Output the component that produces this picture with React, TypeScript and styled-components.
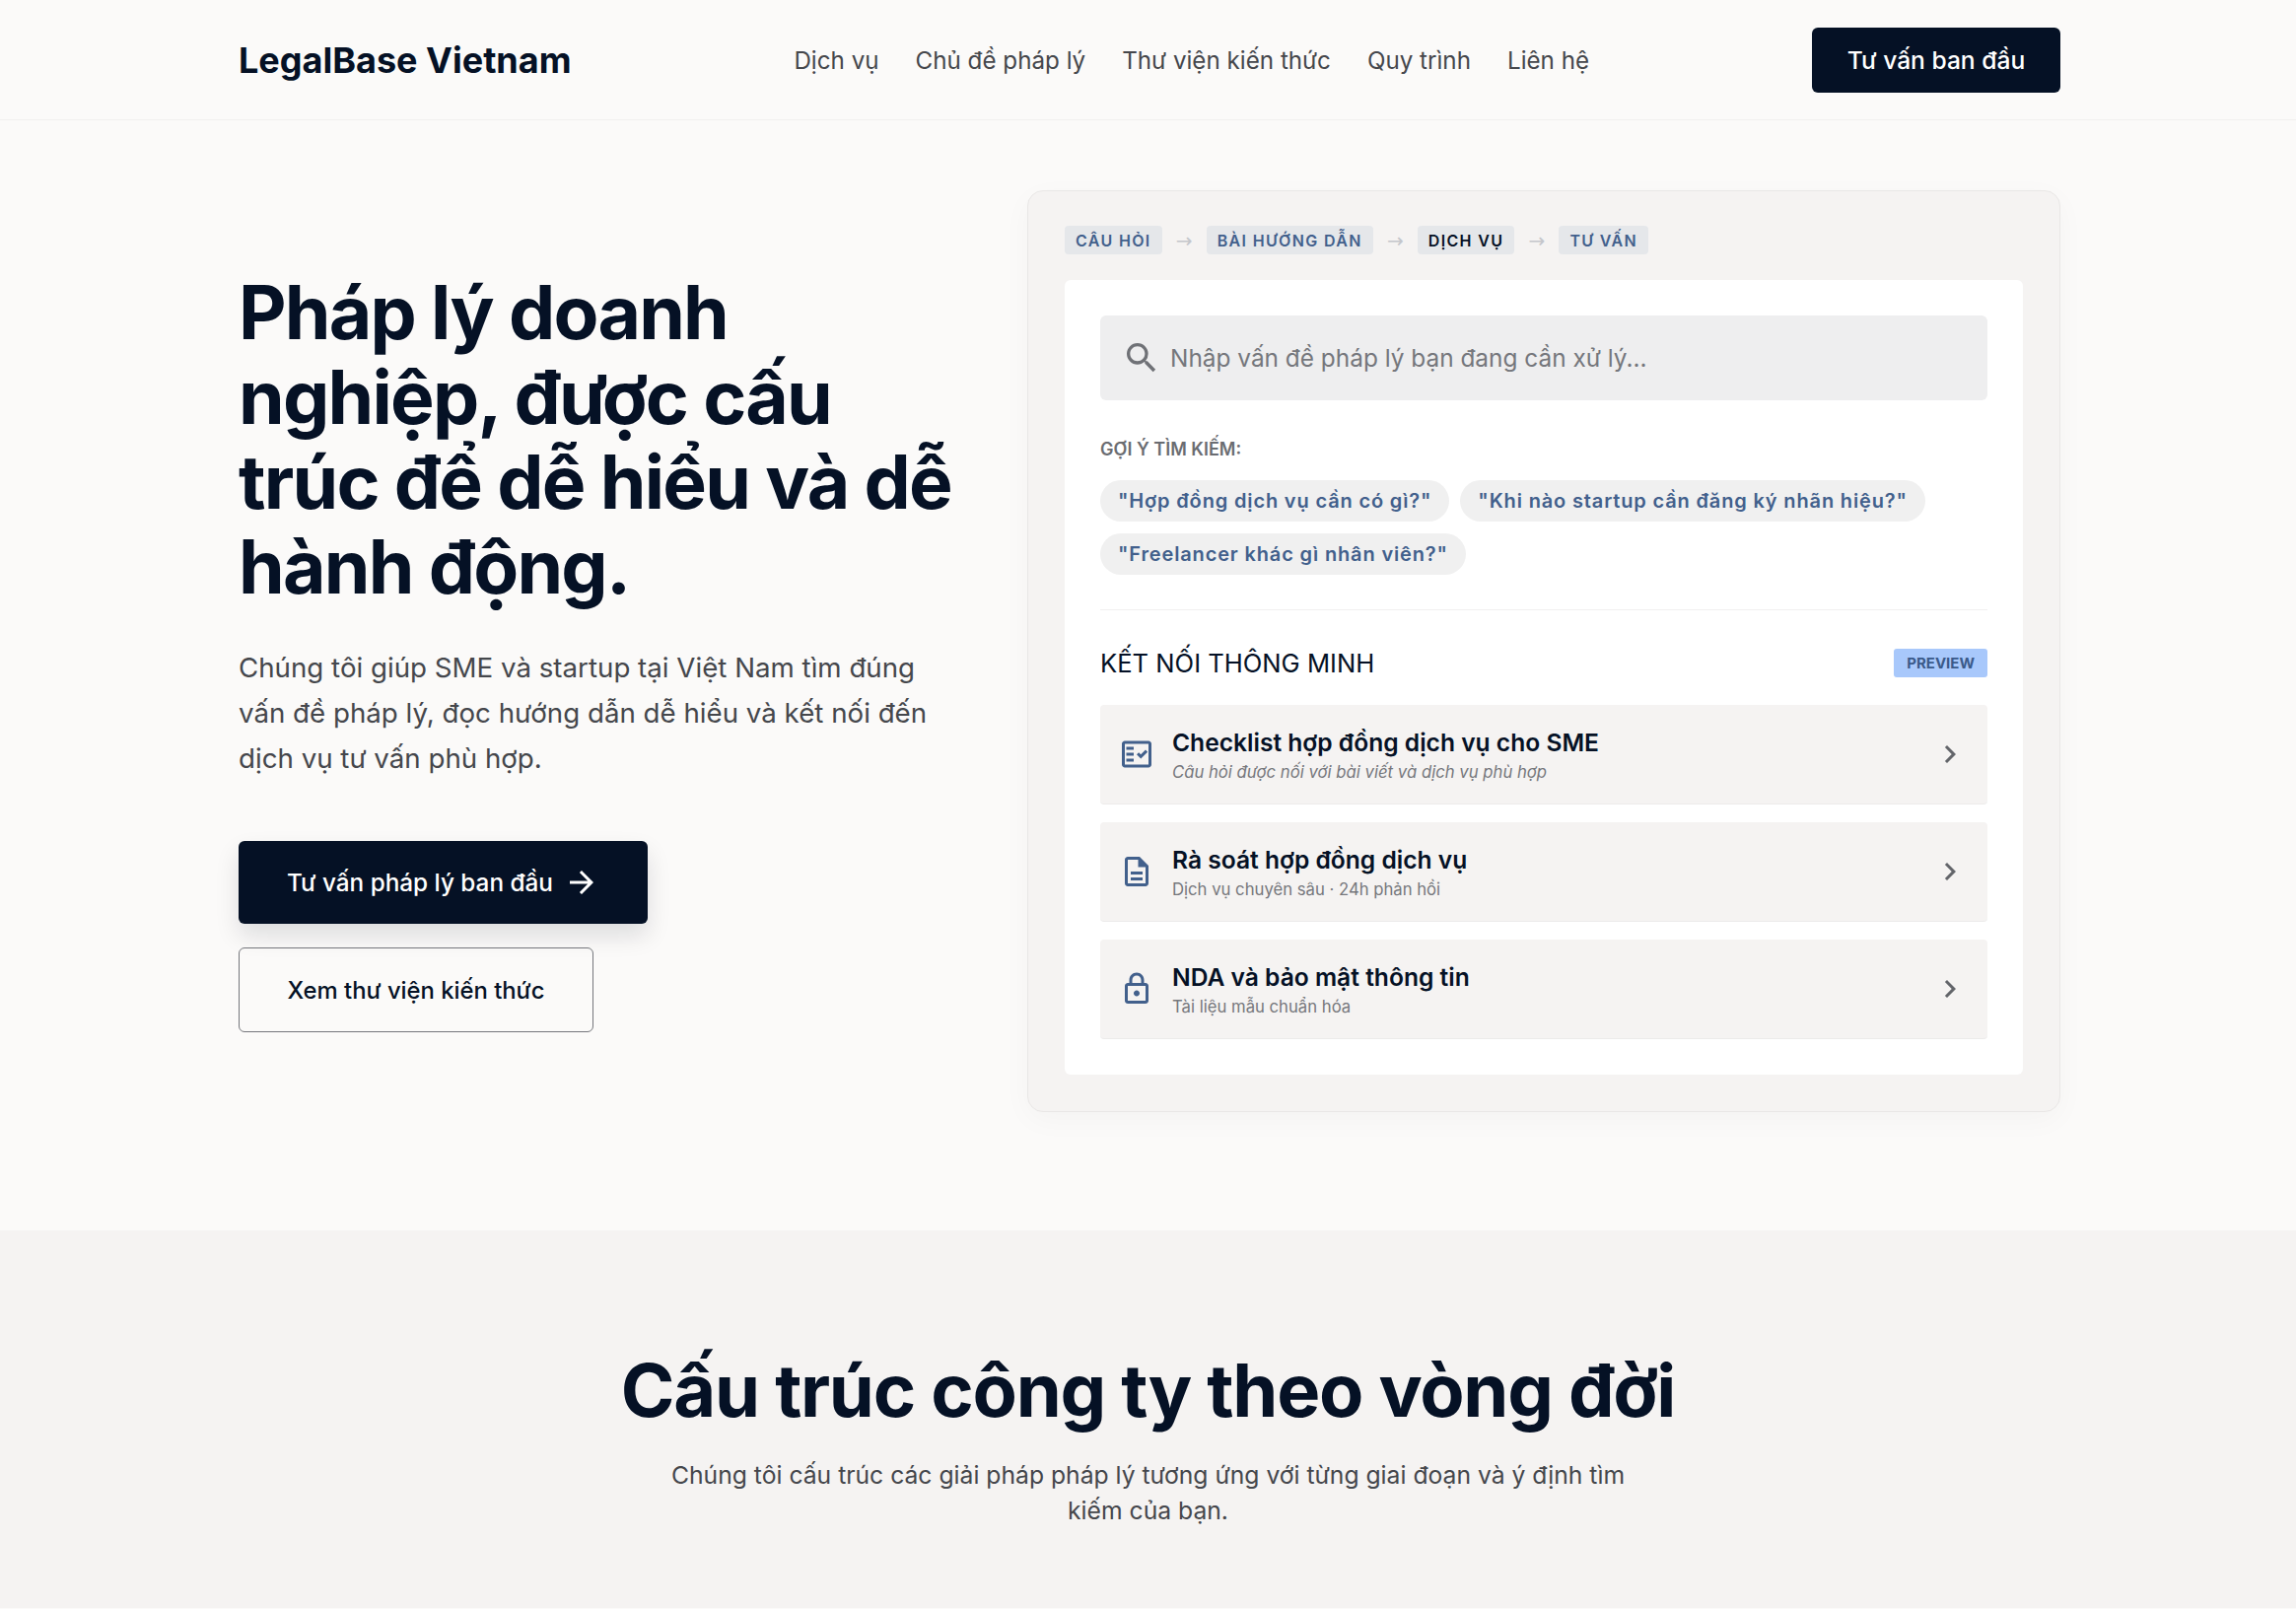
import React from 'react';
import styled, { createGlobalStyle } from 'styled-components';
import {
  MdArrowForward,
  MdChevronRight,
  MdOutlineDescription,
  MdOutlineFactCheck,
  MdOutlineLock,
  MdSearch,
} from 'react-icons/md';

const GlobalStyle = createGlobalStyle`
  * { box-sizing: border-box; }
  body {
    margin: 0;
    background: #fbfaf9;
    color: #051125;
    font-family: Inter, "Noto Sans", sans-serif;
  }
`;

const Container = styled.div`
  width: 1848px;
  margin-left: 242px;
`;

const Header = styled.header`
  height: 122px;
  border-bottom: 1px solid #f1f0ef;
`;

const HeaderRow = styled(Container)`
  height: 121px;
  display: flex;
  align-items: center;
  justify-content: space-between;
`;

const Logo = styled.div`
  font-size: 36px;
  font-weight: 700;
`;

const Nav = styled.nav`
  display: flex;
  gap: 37px;
  padding-top: 2px;
`;

const NavLink = styled.a`
  font-size: 24.2px;
  color: #45474c;
`;

const HeaderButton = styled.button`
  width: 252px;
  height: 66px;
  border: 0;
  border-radius: 6px;
  background: #051125;
  color: #fff;
  font: 500 24.6px Inter, sans-serif;
`;

const Hero = styled(Container)`
  display: grid;
  grid-template-columns: 760px 1048px;
  justify-content: space-between;
  align-items: center;
  padding: 71px 0 120px;
`;

const Title = styled.h1`
  max-width: 740px;
  margin: 0 0 36px;
  font-size: 75px;
  line-height: 86px;
  font-weight: 700;
  letter-spacing: -1.75px;
`;

const Lead = styled.p`
  margin: 0 0 61px;
  max-width: 720px;
  font-size: 27.7px;
  line-height: 46px;
  color: #45474c;
`;

const Actions = styled.div`
  display: flex;
  flex-wrap: wrap;
  gap: 24px;
`;

const PrimaryButton = styled.button`
  width: 415px;
  height: 84px;
  border: 0;
  border-radius: 6px;
  background: #051125;
  color: #fff;
  font: 500 24.3px Inter, sans-serif;
  display: flex;
  align-items: center;
  justify-content: center;
  gap: 11px;
  box-shadow: 0 12px 24px rgba(5, 17, 37, 0.12);

  svg {
    font-size: 36px;
  }
`;

const SecondaryButton = styled.button`
  width: 360px;
  height: 86px;
  border: 1px solid #75777c;
  border-radius: 6px;
  background: transparent;
  color: #051125;
  font: 500 23.8px Inter, sans-serif;
`;

const Panel = styled.div`
  height: 935px;
  padding: 35px 37px;
  border: 1px solid #e9e7e6;
  border-radius: 16px;
  background: #f5f3f2;
  box-shadow: 0 8px 30px rgba(5, 17, 37, 0.03);
`;

const Flow = styled.div`
  display: flex;
  align-items: center;
  gap: 14px;
  margin-bottom: 26px;
`;

const FlowChip = styled.span<{ $active?: boolean }>`
  height: 29px;
  padding: 0 11px;
  display: flex;
  align-items: center;
  border-radius: 4px;
  background: #e5e7ea;
  color: ${p => (p.$active ? '#051125' : '#42608c')};
  font-size: 16px;
  font-weight: 600;
  letter-spacing: 1.35px;
`;

const FlowArrow = styled.span`
  width: 17px;
  color: #c4c6cb;
  font-family: "DejaVu Sans", sans-serif;
  font-size: 20px;
  text-align: center;
`;

const Card = styled.div`
  height: 806px;
  padding: 36px;
  border-radius: 6px;
  background: #fff;
`;

const Search = styled.div`
  height: 86px;
  padding: 0 22px;
  display: flex;
  align-items: center;
  gap: 9px;
  border-radius: 6px;
  background: #eeeeef;
  color: #75777c;
  font-size: 24.4px;

  svg {
    font-size: 40px;
    color: #6f7176;
  }
`;

const SuggestLabel = styled.div`
  margin: 38px 0 19px;
  font-size: 18px;
  line-height: 24px;
  font-weight: 600;
  color: #6a6c71;
`;

const Pills = styled.div`
  display: flex;
  flex-wrap: wrap;
  gap: 12px 11px;
  padding-bottom: 35px;
  border-bottom: 1px solid #f1f0ef;
`;

const Pill = styled.span`
  height: 42px;
  padding: 0 18px;
  display: flex;
  align-items: center;
  border-radius: 21px;
  background: #f0f0f0;
  color: #42608c;
  font-size: 20px;
  font-weight: 600;
  letter-spacing: 0.85px;
`;

const ListHead = styled.div`
  margin: 39px 0 28px;
  display: flex;
  align-items: center;
  justify-content: space-between;
`;

const ListTitle = styled.div`
  font-size: 25.6px;
  line-height: 29px;
`;

const Badge = styled.span`
  height: 29px;
  padding: 0 13px;
  display: flex;
  align-items: center;
  border-radius: 3px;
  background: #a8c8fb;
  color: #3a5a8a;
  font-size: 15px;
  font-weight: 700;
`;

const Rows = styled.div`
  display: flex;
  flex-direction: column;
  gap: 18px;
`;

const Row = styled.div`
  height: 101px;
  padding: 0 20px 0 19px;
  display: flex;
  align-items: center;
  border-radius: 4px;
  border-bottom: 1px solid #ecebea;
  background: #f5f3f2;
`;

const RowIcon = styled.span`
  width: 36px;
  margin-right: 18px;
  display: flex;
  justify-content: center;
  color: #42608c;
  font-size: 36px;
`;

const RowBody = styled.div`
  flex: 1;
`;

const RowTitle = styled.div`
  font-size: 24.6px;
  line-height: 36px;
  font-weight: 600;
`;

const RowSub = styled.div<{ $italic?: boolean }>`
  font-size: 16.7px;
  line-height: 24px;
  color: #75777c;
  font-style: ${p => (p.$italic ? 'italic' : 'normal')};
`;

const Chevron = styled.span`
  display: flex;
  color: #63656a;
  font-size: 36px;
`;

const Stages = styled.section`
  padding: 119px 0 81px;
  background: #f5f3f2;
  text-align: center;
`;

const StagesTitle = styled.h2`
  margin: 0 0 25px;
  font-size: 74px;
  line-height: 86px;
  font-weight: 700;
  letter-spacing: -1.25px;
`;

const StagesLead = styled.p`
  width: 1000px;
  margin: 0 auto;
  font-size: 24.7px;
  line-height: 36px;
  color: #45474c;
`;

const navItems = ['Dịch vụ', 'Chủ đề pháp lý', 'Thư viện kiến thức', 'Quy trình', 'Liên hệ'];

const flowSteps = [
  { label: 'CÂU HỎI' },
  { label: 'BÀI HƯỚNG DẪN' },
  { label: 'DỊCH VỤ', active: true },
  { label: 'TƯ VẤN' },
];

const suggestions = [
  '"Hợp đồng dịch vụ cần có gì?"',
  '"Khi nào startup cần đăng ký nhãn hiệu?"',
  '"Freelancer khác gì nhân viên?"',
];

const rows = [
  {
    icon: <MdOutlineFactCheck />,
    title: 'Checklist hợp đồng dịch vụ cho SME',
    sub: 'Câu hỏi được nối với bài viết và dịch vụ phù hợp',
    italic: true,
  },
  {
    icon: <MdOutlineDescription />,
    title: 'Rà soát hợp đồng dịch vụ',
    sub: 'Dịch vụ chuyên sâu · 24h phản hồi',
  },
  {
    icon: <MdOutlineLock />,
    title: 'NDA và bảo mật thông tin',
    sub: 'Tài liệu mẫu chuẩn hóa',
  },
];

export default function App() {
  return (
    <>
      <GlobalStyle />
      <Header>
        <HeaderRow>
          <Logo>LegalBase Vietnam</Logo>
          <Nav>
            {navItems.map(item => (
              <NavLink key={item}>{item}</NavLink>
            ))}
          </Nav>
          <HeaderButton>Tư vấn ban đầu</HeaderButton>
        </HeaderRow>
      </Header>

      <Hero>
        <div>
          <Title>Pháp lý doanh nghiệp, được cấu trúc để dễ hiểu và dễ hành động.</Title>
          <Lead>
            Chúng tôi giúp SME và startup tại Việt Nam tìm đúng vấn đề pháp lý, đọc hướng dẫn dễ
            hiểu và kết nối đến dịch vụ tư vấn phù hợp.
          </Lead>
          <Actions>
            <PrimaryButton>
              Tư vấn pháp lý ban đầu <MdArrowForward />
            </PrimaryButton>
            <SecondaryButton>Xem thư viện kiến thức</SecondaryButton>
          </Actions>
        </div>

        <Panel>
          <Flow>
            {flowSteps.map((step, i) => (
              <React.Fragment key={step.label}>
                {i > 0 && <FlowArrow>→</FlowArrow>}
                <FlowChip $active={step.active}>{step.label}</FlowChip>
              </React.Fragment>
            ))}
          </Flow>
          <Card>
            <Search>
              <MdSearch />
              Nhập vấn đề pháp lý bạn đang cần xử lý...
            </Search>
            <SuggestLabel>GỢI Ý TÌM KIẾM:</SuggestLabel>
            <Pills>
              {suggestions.map(text => (
                <Pill key={text}>{text}</Pill>
              ))}
            </Pills>
            <ListHead>
              <ListTitle>KẾT NỐI THÔNG MINH</ListTitle>
              <Badge>PREVIEW</Badge>
            </ListHead>
            <Rows>
              {rows.map(row => (
                <Row key={row.title}>
                  <RowIcon>{row.icon}</RowIcon>
                  <RowBody>
                    <RowTitle>{row.title}</RowTitle>
                    <RowSub $italic={row.italic}>{row.sub}</RowSub>
                  </RowBody>
                  <Chevron>
                    <MdChevronRight />
                  </Chevron>
                </Row>
              ))}
            </Rows>
          </Card>
        </Panel>
      </Hero>

      <Stages>
        <StagesTitle>Cấu trúc công ty theo vòng đời</StagesTitle>
        <StagesLead>
          Chúng tôi cấu trúc các giải pháp pháp lý tương ứng với từng giai đoạn và ý định tìm kiếm
          của bạn.
        </StagesLead>
      </Stages>
    </>
  );
}
